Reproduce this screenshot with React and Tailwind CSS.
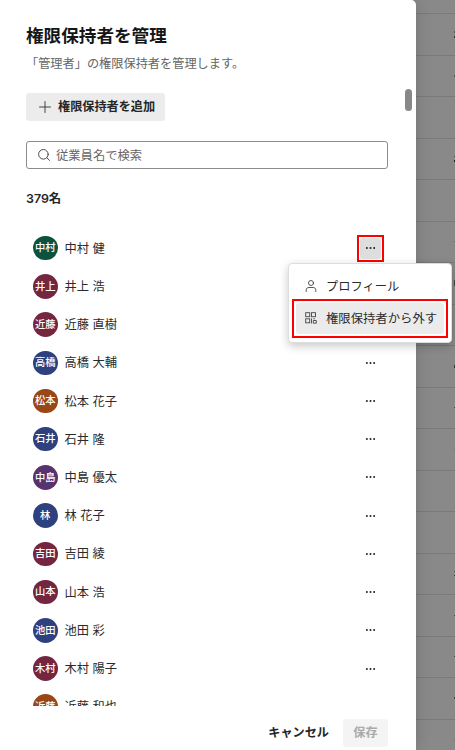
import clsx from 'clsx'

const members = [
  { badge: '中村', name: '中村 健', color: 'bg-[#0b5340]' },
  { badge: '井上', name: '井上 浩', color: 'bg-[#742641]' },
  { badge: '近藤', name: '近藤 直樹', color: 'bg-[#742641]' },
  { badge: '高橋', name: '高橋 大輔', color: 'bg-[#2f407e]' },
  { badge: '松本', name: '松本 花子', color: 'bg-[#9a4717]' },
  { badge: '石井', name: '石井 隆', color: 'bg-[#2f407e]' },
  { badge: '中島', name: '中島 優太', color: 'bg-[#57326f]' },
  { badge: '林', name: '林 花子', color: 'bg-[#2f407e]' },
  { badge: '吉田', name: '吉田 綾', color: 'bg-[#742641]' },
  { badge: '山本', name: '山本 浩', color: 'bg-[#742641]' },
  { badge: '池田', name: '池田 彩', color: 'bg-[#2f407e]' },
  { badge: '木村', name: '木村 陽子', color: 'bg-[#742641]' },
  { badge: '近藤', name: '近藤 和也', color: 'bg-[#9a4717]' },
]

// Visible slivers of the next table column, one entry per row
const slivers = [
  ['h-[2px] bg-[#555]', 'h-[2px] bg-[#333]'],
  ['h-[2px] bg-[#555]'],
  [],
  ['h-px bg-[#444]', 'h-[2px] bg-[#222]'],
  [],
  ['h-px bg-[#666]'],
  ['h-[6px] bg-[#444]'],
  [],
  ['h-[3px] bg-[#333]'],
  ['h-px bg-[#444]'],
  ['h-px bg-[#707070]'],
  [],
  [],
  ['h-px bg-[#555]', 'h-px bg-[#333]'],
  ['h-px bg-[#444]'],
  ['h-px bg-[#444]'],
  ['h-[2px] bg-[#444]'],
  ['h-px bg-[#777]'],
]

function PlusIcon() {
  return (
    <svg className="h-3 w-3 shrink-0" viewBox="0 0 12 12" fill="none" stroke="#333" strokeWidth="0.9" strokeLinecap="round">
      <path d="M6 .5v11M.5 6h11" />
    </svg>
  )
}

function SearchIcon() {
  return (
    <svg className="h-3 w-3 shrink-0" viewBox="0 0 12 12" fill="none" stroke="#444" strokeWidth="0.95" strokeLinecap="round">
      <circle cx="5.4" cy="5.3" r="4.8" />
      <path d="m8.8 8.7 2.8 2.8" />
    </svg>
  )
}

function PersonIcon() {
  return (
    <svg className="h-3 w-3 shrink-0" viewBox="0 0 12 12" fill="none" stroke="#444" strokeWidth="0.9" strokeLinecap="round">
      <circle cx="6" cy="3" r="2.5" />
      <path d="M1.2 11.6v-1.4c0-1.7 1-2.7 2.7-2.7h4.2c1.7 0 2.7 1 2.7 2.7v1.4" />
    </svg>
  )
}

function GridIcon() {
  return (
    <svg className="h-3 w-3 shrink-0" viewBox="0 0 12 12" fill="none" stroke="#444" strokeWidth="0.9">
      <rect x=".7" y=".7" width="4" height="4" />
      <rect x="6.5" y=".7" width="4" height="4" />
      <rect x=".7" y="6.8" width="4" height="4" />
      <path d="M6.5 6.4v5M8.3 8.5h3v2.7h-3zM8.3 6.8h1.5" />
    </svg>
  )
}

function DotsIcon() {
  return (
    <svg className="h-2 w-[11px]" viewBox="0 0 11 8" fill="#222">
      <circle cx="1.9" cy="4" r="1" />
      <circle cx="5.5" cy="4" r="1" />
      <circle cx="9.1" cy="4" r="1" />
    </svg>
  )
}

function RowMenu() {
  return (
    <div className="absolute top-[28.2px] right-[-68px] z-10 h-[80px] w-[164px] rounded-[4px] border border-[#ddd] bg-white pt-[6px] shadow-[0_3px_10px_rgba(0,0,0,0.22)]">
      <div className="flex h-[29px] items-center gap-[9px] pt-[3px] pl-4 text-[12.25px] text-[#2b2b2b]">
        <PersonIcon />
        <span className="pt-[2px]">プロフィール</span>
      </div>
      <div className="ml-[3px] h-[39px] w-[156px] border-2 border-[#f00] p-0.5">
        <div className="flex h-full items-center gap-[9px] rounded-[3px] bg-[#ebebeb] pl-[9px] text-[12.35px] whitespace-nowrap text-[#2b2b2b]">
          <GridIcon />
          <span className="pt-px">権限保持者から外す</span>
        </div>
      </div>
    </div>
  )
}

function MemberRow({ member, open }) {
  return (
    <li className="flex h-[38.23px] items-center justify-between pr-1 pl-[7px]">
      <div className="flex items-center gap-[7px]">
        <span className={clsx('flex size-[24.5px] items-center justify-center rounded-full text-[10.3px] font-medium text-white', member.color)}>
          {member.badge}
        </span>
        <span className="pt-[1.5px] text-[12.25px] text-[#2b2b2b]">{member.name}</span>
      </div>
      <div className="relative">
        <button
          className={clsx(
            'flex h-[27px] w-[27px] items-center justify-center border-2 p-[1px]',
            open ? 'border-[#f00]' : 'border-transparent'
          )}
        >
          <span className={clsx('flex h-full w-full items-center justify-center rounded-[3px]', open && 'bg-[#dedede]')}>
            <DotsIcon />
          </span>
        </button>
        {open && <RowMenu />}
      </div>
    </li>
  )
}

function App() {
  return (
    <div className="flex h-[750px] w-[455px] overflow-hidden bg-[#898989] font-['Inter','Noto_Sans_CJK_JP',sans-serif] text-[#262626]">
      <main className="relative z-10 flex h-full w-[416px] shrink-0 flex-col rounded-tr-[5px] bg-white pl-[26px] shadow-[0_0_16px_rgba(0,0,0,0.16)]">
        <h1 className="mt-[23px] text-[17.6px] leading-[26px] font-bold text-[#161616]">権限保持者を管理</h1>
        <p className="mt-[5px] text-[12.2px] leading-5 text-[#666]">「管理者」の権限保持者を管理します。</p>
        <button className="mt-[19px] flex h-7 w-[139px] shrink-0 items-center gap-[7px] rounded-[3px] bg-[#ececec] pl-[13px] text-[12.15px] font-bold whitespace-nowrap">
          <PlusIcon />
          権限保持者を追加
        </button>
        <div className="mt-5 flex h-7 w-[362px] shrink-0 items-center gap-[6px] rounded-[3px] border border-[#8c8c8c] pl-[11px] text-[12.3px] text-[#666]">
          <SearchIcon />
          <span className="pt-[2px]">従業員名で検索</span>
        </div>
        <p className="mt-5 text-[12.4px] leading-5 font-semibold">379名</p>
        <ul className="mt-5 h-[477px] w-[362px] shrink-0 [clip-path:inset(0_-80px_0_0)]">
          {members.map((member, i) => (
            <MemberRow key={i} member={member} open={i === 0} />
          ))}
        </ul>
        <footer className="mt-[13px] flex w-[362px] items-center justify-end gap-[14px] text-[12.15px] font-bold">
          <button>キャンセル</button>
          <button className="h-7 w-[45px] rounded-[3px] bg-[#f4f4f4] text-[#aaa]">保存</button>
        </footer>
        {/* Scrollbar */}
        <div className="absolute top-[89px] right-1 h-[22px] w-[7px] rounded-full bg-[#888]" />
      </main>
      <aside className="w-[39px] shrink-0 overflow-hidden">
        <div className="h-[14px] border-b border-[#7a7a7a]" />
        {slivers.map((marks, i) => (
          <div key={i} className="flex h-[41.5px] flex-col items-end justify-center gap-[3px] border-b border-[#7a7a7a]">
            {marks.map((mark, j) => (
              <span key={j} className={clsx('w-px', mark)} />
            ))}
          </div>
        ))}
      </aside>
    </div>
  )
}

export default App
